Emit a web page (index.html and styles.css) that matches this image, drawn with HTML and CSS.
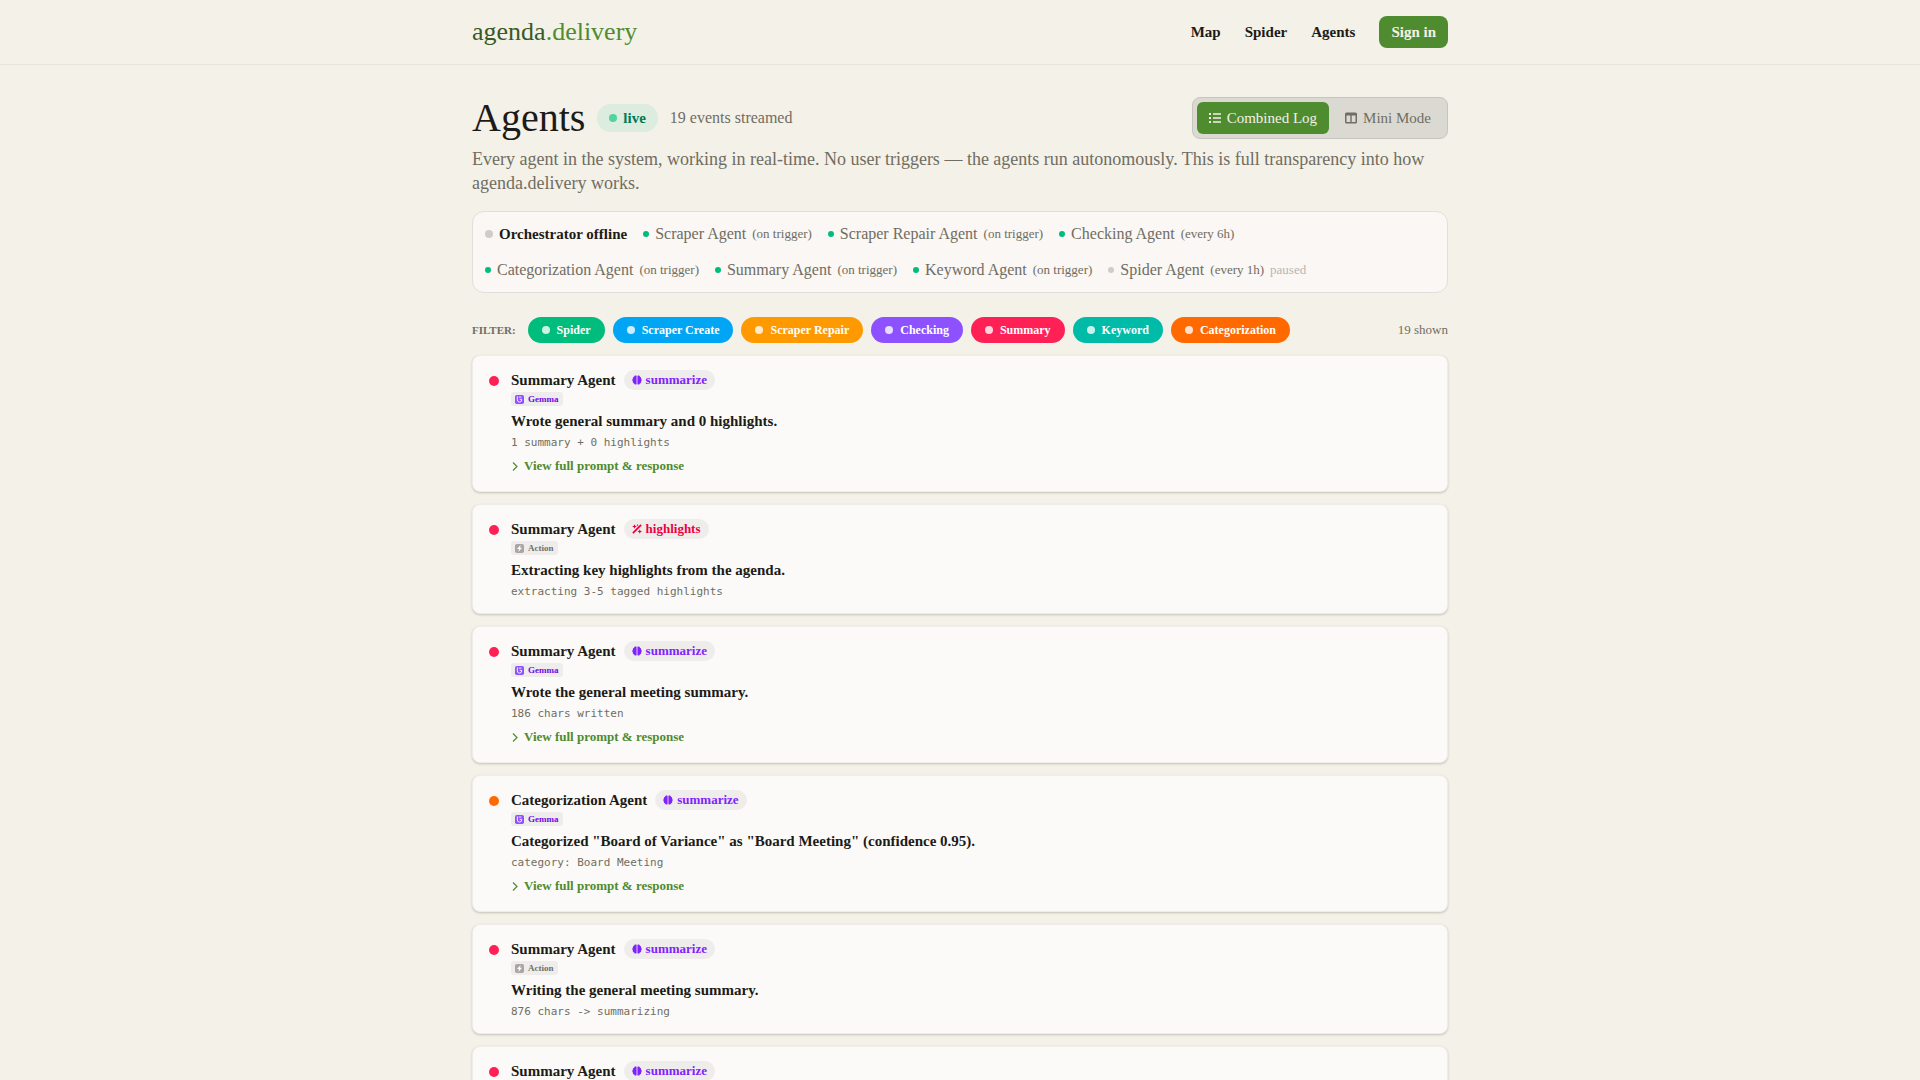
FILE: index.html
```html
<!DOCTYPE html>
<html lang="en">
<head>
<meta charset="utf-8">
<meta name="viewport" content="width=device-width, initial-scale=1">
<title>Agents · agenda.delivery</title>
<link rel="stylesheet" href="styles.css">
</head>
<body>
<svg class="sprite" aria-hidden="true">
  <symbol id="brain" viewBox="0 0 12 12"><path d="M5.500 1.200v9.600c-.4.9-2.300.9-2.700-.4C1.400 10.200.7 9 1.100 7.900.2 7 .2 5.300 1 4.500.9 3 1.500 2.200 2.500 2 2.900.6 5 .3 5.500 1.200zM6.500 1.200v9.600c.4.9 2.300.9 2.700-.4 1.400-.2 2.100-1.400 1.700-2.500.9-.9.9-2.600.1-3.400.1-1.500-.5-2.300-1.500-2.500C9.100.6 7 .3 6.500 1.200z"/></symbol>
  <symbol id="wand" viewBox="0 0 12 12"><path d="M10.200.3l1.500 1.500-9.900 9.900L.3 10.200z"/><path d="M3 .2l.8 2 2 .8-2 .8-.8 2-.8-2-2-.8 2-.8zM9.300 6.300l.8 1.900 1.900.8-1.900.8-.8 1.900-.8-1.900L6.600 9l1.900-.8zM6.600 0l.4 1 1 .4-1 .4-.4 1-.4-1-1-.4 1-.4z"/></symbol>
  <symbol id="chevron" viewBox="0 0 9 9"><path d="M2 .5L6 4.500 2 8.500" fill="none" stroke="currentColor" stroke-width="1.200"/></symbol>
  <symbol id="bolt" viewBox="0 0 10 10"><rect width="10" height="10" rx="2"/><path d="M6.300 1L2.200 5.600h2.300L3.700 9l4.100-4.700H5.500z" fill="#fff"/></symbol>
  <symbol id="gemma" viewBox="0 0 10 10"><rect width="10" height="10" rx="2"/><path d="M2.600 1.500v4A2.400 2.400 0 0 0 7.400 5.500V4.800H5.200M4.200 2.300H7.200" fill="none" stroke="#fff" stroke-width="1"/></symbol>
</svg>
<header class="site-header">
  <div class="container bar">
    <a class="logo" href="#">agenda<span class="logo-accent">.delivery</span></a>
    <nav class="nav">
      <a href="#">Map</a><a href="#">Spider</a><a href="#">Agents</a>
      <button class="sign-in" type="button">Sign in</button>
    </nav>
  </div>
</header>
<main class="container main">
  <div class="heading">
    <h1>Agents</h1>
    <span class="live"><i class="dot"></i>live</span>
    <span class="count">19 events streamed</span>
    <div class="modes">
      <button class="mode active" type="button"><svg class="icon12" viewBox="0 0 12 12"><path d="M4 1.300h8v1.400H4zM4 5.300h8v1.400H4zM4 9.300h8v1.400H4zM0 1h2v2H0zM0 5h2v2H0zM0 9h2v2H0z"/></svg>Combined Log</button>
      <button class="mode" type="button"><svg class="icon12" viewBox="0 0 12 12"><path fill-rule="evenodd" d="M1.500.5h9A1.500 1.500 0 0 1 12 2v8a1.500 1.500 0 0 1-1.500 1.500h-9A1.500 1.500 0 0 1 0 10V2A1.500 1.500 0 0 1 1.500.5zM1.500 3.500V10h3.800V3.500zM6.700 3.500V10h3.800V3.500z"/></svg>Mini Mode</button>
    </div>
  </div>
  <p class="intro">Every agent in the system, working in real-time. No user triggers — the agents run autonomously. This is full transparency into how agenda.delivery works.</p>
  <ul class="status">
    <li class="orchestrator"><i class="dot off"></i>Orchestrator offline</li>
    <li><i class="dot small"></i>Scraper Agent <small>(on trigger)</small></li>
    <li><i class="dot small"></i>Scraper Repair Agent <small>(on trigger)</small></li>
    <li><i class="dot small"></i>Checking Agent <small>(every 6h)</small></li>
    <li><i class="dot small"></i>Categorization Agent <small>(on trigger)</small></li>
    <li><i class="dot small"></i>Summary Agent <small>(on trigger)</small></li>
    <li><i class="dot small"></i>Keyword Agent <small>(on trigger)</small></li>
    <li><i class="dot small off"></i>Spider Agent <small>(every 1h)</small><small class="paused">paused</small></li>
  </ul>
  <div class="filters">
    <span class="filter-label">FILTER:</span>
    <button class="pill spider" type="button"><i class="dot"></i>Spider</button>
    <button class="pill create" type="button"><i class="dot"></i>Scraper Create</button>
    <button class="pill repair" type="button"><i class="dot"></i>Scraper Repair</button>
    <button class="pill checking" type="button"><i class="dot"></i>Checking</button>
    <button class="pill summary" type="button"><i class="dot"></i>Summary</button>
    <button class="pill keyword" type="button"><i class="dot"></i>Keyword</button>
    <button class="pill categorization" type="button"><i class="dot"></i>Categorization</button>
    <span class="shown">19 shown</span>
  </div>
  <section class="log">
    <article class="card">
      <i class="dot large summary"></i>
      <div class="entry">
        <div class="entry-head"><h2>Summary Agent</h2><span class="tag"><svg class="icon10"><use href="#brain"/></svg>summarize</span></div>
        <span class="chip gemma"><svg class="icon9"><use href="#gemma"/></svg>Gemma</span>
        <p class="message">Wrote general summary and 0 highlights.</p>
        <p class="detail">1 summary + 0 highlights</p>
        <button class="more" type="button"><svg class="icon9"><use href="#chevron"/></svg>View full prompt &amp; response</button>
      </div>
    </article>
    <article class="card">
      <i class="dot large summary"></i>
      <div class="entry">
        <div class="entry-head"><h2>Summary Agent</h2><span class="tag highlights"><svg class="icon10"><use href="#wand"/></svg>highlights</span></div>
        <span class="chip"><svg class="icon9"><use href="#bolt"/></svg>Action</span>
        <p class="message">Extracting key highlights from the agenda.</p>
        <p class="detail">extracting 3-5 tagged highlights</p>
      </div>
    </article>
    <article class="card">
      <i class="dot large summary"></i>
      <div class="entry">
        <div class="entry-head"><h2>Summary Agent</h2><span class="tag"><svg class="icon10"><use href="#brain"/></svg>summarize</span></div>
        <span class="chip gemma"><svg class="icon9"><use href="#gemma"/></svg>Gemma</span>
        <p class="message">Wrote the general meeting summary.</p>
        <p class="detail">186 chars written</p>
        <button class="more" type="button"><svg class="icon9"><use href="#chevron"/></svg>View full prompt &amp; response</button>
      </div>
    </article>
    <article class="card">
      <i class="dot large categorization"></i>
      <div class="entry">
        <div class="entry-head"><h2>Categorization Agent</h2><span class="tag"><svg class="icon10"><use href="#brain"/></svg>summarize</span></div>
        <span class="chip gemma"><svg class="icon9"><use href="#gemma"/></svg>Gemma</span>
        <p class="message">Categorized "Board of Variance" as "Board Meeting" (confidence 0.95).</p>
        <p class="detail">category: Board Meeting</p>
        <button class="more" type="button"><svg class="icon9"><use href="#chevron"/></svg>View full prompt &amp; response</button>
      </div>
    </article>
    <article class="card">
      <i class="dot large summary"></i>
      <div class="entry">
        <div class="entry-head"><h2>Summary Agent</h2><span class="tag"><svg class="icon10"><use href="#brain"/></svg>summarize</span></div>
        <span class="chip"><svg class="icon9"><use href="#bolt"/></svg>Action</span>
        <p class="message">Writing the general meeting summary.</p>
        <p class="detail">876 chars -&gt; summarizing</p>
      </div>
    </article>
    <article class="card">
      <i class="dot large summary"></i>
      <div class="entry">
        <div class="entry-head"><h2>Summary Agent</h2><span class="tag"><svg class="icon10"><use href="#brain"/></svg>summarize</span></div>
      </div>
    </article>
  </section>
</main>
</body>
</html>
```
FILE: styles.css
```css
* { box-sizing: border-box; margin: 0; }
html { scrollbar-width: none; }
body {
  background: #f4f1e8;
  color: #1c1b17;
  font: 400 15px/20px "Liberation Serif", serif;
}
a { color: inherit; text-decoration: none; }
button { font: inherit; color: inherit; border: 0; padding: 0; background: none; cursor: pointer; }
svg { fill: currentColor; flex: none; }
.sprite { display: none; }
.icon12 { width: 12px; height: 12px; }
.icon10 { width: 10px; height: 10px; }
.icon9 { width: 9px; height: 9px; }
.container { max-width: 1024px; margin: 0 auto; padding: 0 24px; }

.site-header { border-bottom: 1px solid #e6e4dc; }
.bar { display: flex; align-items: center; justify-content: space-between; height: 64px; }
.logo { font-size: 26px; line-height: 32px; color: #3a5a24; }
.logo-accent { color: #4f8c2f; }
.nav { display: flex; align-items: center; gap: 24px; font-weight: 700; }
.sign-in { height: 32px; padding: 0 12px; border-radius: 8px; background: #4f8b2f; color: #f4f1e8; }

.main { padding-top: 32px; }
.heading { display: flex; align-items: center; gap: 12px; height: 42px; }
h1 { font-size: 40px; line-height: 40px; font-weight: 400; }
.dot { flex: none; width: 8px; height: 8px; border-radius: 50%; background: #00bc7d; }
.dot.small { width: 6px; height: 6px; }
.dot.large { width: 10px; height: 10px; margin-top: 6px; }
.dot.off { background: #d0cdc9; }
.dot.summary { background: #ff2056; }
.dot.categorization { background: #ff6900; }
.live { display: flex; align-items: center; gap: 6px; height: 28px; padding: 0 12px; border-radius: 14px; background: #dcecdf; color: #007a55; font-weight: 700; }
.live .dot { background: #53d2a5; }
.count { color: #706d62; font-size: 16px; }
.modes { display: flex; gap: 4px; margin-left: auto; padding: 4px; border: 1px solid #c6c5bf; border-radius: 8px; background: #dbdad2; }
.mode { display: flex; align-items: center; gap: 6px; height: 32px; padding: 0 12px; border-radius: 6px; color: #706d62; }
.mode.active { background: #4f8b2f; color: #f4f1e8; }
.intro { margin-top: 8px; font-size: 18px; line-height: 24px; color: #706d62; }

.status { display: flex; flex-wrap: wrap; gap: 16px; margin-top: 16px; padding: 12px; list-style: none; border: 1px solid #e0deda; border-radius: 12px; background: #faf7f4; color: #706d62; font-size: 16px; }
.status li { display: flex; align-items: center; gap: 6px; }
.status .orchestrator { color: #1c1b17; font-size: 15px; font-weight: 700; }
.status small { font-size: 13px; }
.status .paused { color: #b8b5af; }

.filters { display: flex; align-items: center; gap: 8px; margin-top: 24px; font-size: 12px; }
.filter-label { margin-right: 4px; color: #706d62; font-weight: 700; font-size: 11px; }
.pill { display: flex; align-items: center; gap: 7px; height: 26px; padding: 0 14px; border-radius: 13px; color: #fff; font-weight: 700; }
.pill .dot { background: #fff; opacity: .8; }
.pill.spider { background: #00bc7d; }
.pill.create { background: #00a6f4; }
.pill.repair { background: #fe9a00; }
.pill.checking { background: #8e51ff; }
.pill.summary { background: #ff2056; }
.pill.keyword { background: #00bba7; }
.pill.categorization { background: #ff6900; }
.shown { margin-left: auto; color: #706d62; font-size: 13px; }

.log { display: grid; gap: 12px; margin-top: 12px; }
.card { display: flex; gap: 12px; padding: 14px 16px; border: 1px solid #efede9; border-radius: 8px; background: #fbfaf8; box-shadow: 0 1px 3px #0000001a, 0 1px 2px #0000001a; }
.entry { display: flex; flex-direction: column; align-items: flex-start; }
.entry-head { display: flex; align-items: center; gap: 8px; }
h2 { font-size: 15px; line-height: 20px; font-weight: 700; }
.tag { display: flex; align-items: center; gap: 4px; height: 20px; padding: 0 8px; border-radius: 10px; background: #efedec; color: #7f22fe; font-size: 13px; font-weight: 700; }
.tag.highlights { color: #ec003f; }
.chip { display: flex; align-items: center; gap: 4px; height: 14px; margin-top: 2px; padding: 0 4px; border-radius: 3px; background: #efedec; color: #706d62; font-size: 9px; line-height: 14px; font-weight: 700; }
.chip svg { color: #aaa7a2; }
.chip.gemma { color: #7008e7; }
.chip.gemma svg { color: #8e51ff; }
.message { margin-top: 5px; font-weight: 700; }
.detail { margin-top: 4px; font: 11px/15px "DejaVu Sans Mono", monospace; color: #706d62; }
.more { display: flex; align-items: center; gap: 4px; height: 22px; margin-top: 5px; color: #4f8b2f; font-size: 13px; font-weight: 700; }
```
